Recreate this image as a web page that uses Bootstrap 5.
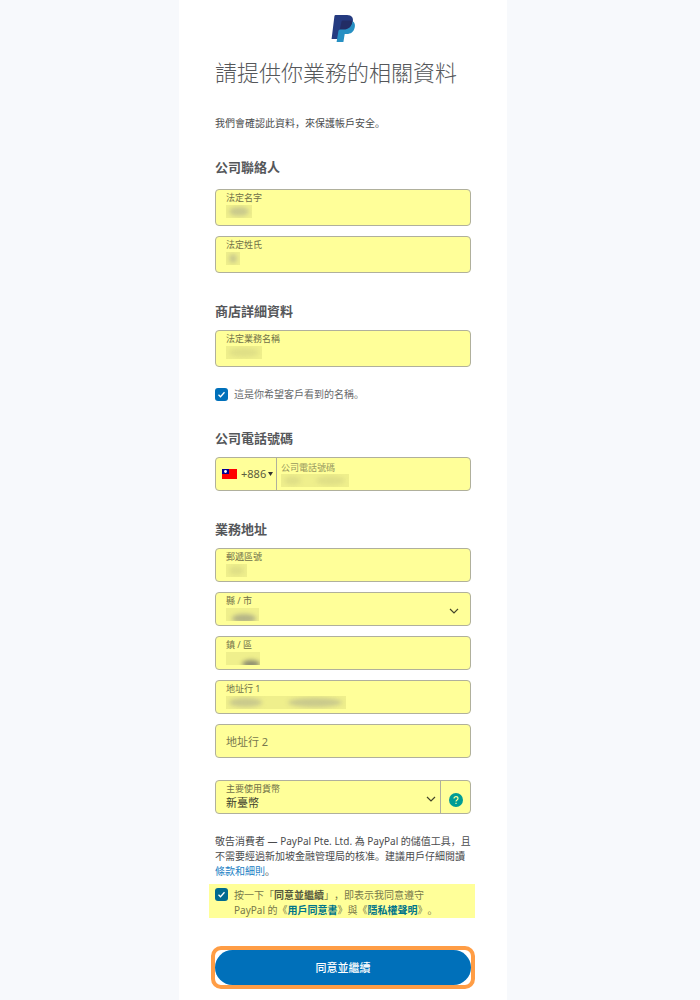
<!DOCTYPE html>
<html lang="zh-Hans">
<head>
<meta charset="utf-8">
<meta name="viewport" content="width=device-width, initial-scale=1">
<title>請提供你業務的相關資料</title>
<link href="https://cdn.jsdelivr.net/npm/bootstrap@5.3.0/dist/css/bootstrap.min.css" rel="stylesheet">
<style>
  body { background: #f7f9fc; padding-right: 14px; color: #4a4b4d; font: 10px/15px "Noto Sans", "Noto Sans CJK SC", sans-serif; text-spacing-trim: space-all; }
  .sheet { max-width: 328px; min-height: 100vh; padding: 14px 36px 12px; }
  .page-title { font: 300 22px/32px "Noto Sans CJK SC", sans-serif; color: #55575a; margin: 13px 0 29px; white-space: nowrap; }
  .block { padding-top: 18px; }
  .block-wide { padding-top: 26px; }
  .section-title { font-size: 13px; line-height: 20px; font-weight: 700; color: #55575a; margin: 0 0 9px; }
  .contact .section-title { margin-bottom: 12px; }
  .field { background: #ffff99; border: 1px solid #b0b09c; border-radius: 4px; height: 34px; margin-bottom: 10px; }
  .field-tall { height: 37px; }
  .field label { display: block; font-size: 9px; line-height: 12px; padding: 2px 10px 0; color: #6f7048; }
  .field input, .field select { display: block; width: 100%; height: 16px; border: 0; background: none; padding: 0 10px; font-size: 11px; line-height: 16px; color: #3b3c2c; outline: 0; appearance: none; }
  .field .whole { height: 32px; font-size: 11px; }
  .field .whole::placeholder { color: #77784e; opacity: 1; }
  .redacted { left: 10px; top: 15px; height: 13px; background: #efef8c; overflow: hidden; pointer-events: none; }
  .redacted i { position: absolute; inset: 2px 3px; border-radius: 50%; background: #c9c98c; filter: blur(2px); }
  .redacted i + i { left: 40%; }
  .redacted i.wide-a { right: 70%; }
  .redacted i.wide-b { left: 52%; right: 4px; }
  .redacted.faint i { background: #dfdf86; }
  .redacted i.low { inset: 6px 3px -2px 6px; background: #b4b487; }
  .redacted i.corner { inset: 8px 0 -3px 16px; background: #8f8f70; }
  .chevron { right: 11px; top: 14px; pointer-events: none; }
  .field .dial { width: 61px; border-right: 1px solid #b0b09c; }
  .dial .dial-code { padding: 0 0 0 25px; height: 32px; font-size: 11px; color: #5c5d40; }
  .dial svg.flag { left: 6px; top: 11px; }
  .dial svg.caret { right: 3px; top: 14px; }
  .field .tel label { padding: 4px 4px 0; color: #97985e; }
  .tel .redacted { left: 4px; top: 16px; }
  .currency { margin-top: 22px; }
  .help { width: 30px; border: 0; border-left: 1px solid #b0b09c; background: none; padding: 6px 0 0; }
  .tick { appearance: none; flex: none; width: 13px; height: 13px; margin: 0 6px 0 0; border-radius: 3px; background: #0070ba url("data:image/svg+xml,%3Csvg xmlns='http://www.w3.org/2000/svg' viewBox='0 0 13 13'%3E%3Cpath d='M3.5 6.8l2 2 4-4.6' fill='none' stroke='%23fff' stroke-width='1.3'/%3E%3C/svg%3E"); }
  .shown-name { margin-top: 20px; color: #66686b; }
  .agree { background: #ffff99; margin: 5px -4px 0 -6px; padding: 4px 6px 0; height: 34px; line-height: 15px; color: #77784a; }
  .agree b { color: #55573c; font-weight: 600; }
  .agree .tick { background-color: #006a90; }
  .agree a { color: #00758a; font-weight: 600; text-decoration: none; }
  .notice a { color: #1a80c4; text-decoration: none; }
  .cta-frame { border: 4px solid #ff9d45; border-radius: 10px; margin: 28px -4px 0; }
  .cta { background: #0070ba; color: #fff; border: 0; border-radius: 18px; height: 35px; font-size: 11px; line-height: 16px; font-weight: 500; }
</style>
</head>
<body>
<main class="sheet bg-white mx-auto">
  <div class="text-center">
    <svg class="d-block mx-auto" width="24" height="28" viewBox="0 0 24 28" role="img" aria-label="PayPal">
      <path d="M4.600 1H16c5 0 6.600 3 5.800 7-1 5.500-4.200 8.500-9.500 8.500H9.500L8 25H.6L3.400 2.200Q3.600 1 4.600 1z" fill="#253b80"/>
      <path d="M10.500 7.500Q10.700 6.500 12 6.500h6.500q2 0 3.100.8-.8 8.200-9.400 8.700H8.800z" fill="#222d65"/>
      <path d="M21.600 7.200c2.100 1.200 2.700 3.600 2.100 6.300-1 4.500-4 6.500-8 6.500h-2l-1.300 8H5.600L7.400 17q.2-1.500 1.800-1.500h3.400c5 0 8.200-2.800 9-8.300z" fill="#2790c3"/>
    </svg>
  </div>
  <h1 class="page-title">請提供你業務的相關資料</h1>
  <p class="mb-0">我們會確認此資料，來保護帳戶安全。</p>

  <form>
    <section class="block-wide contact">
      <h2 class="section-title">公司聯絡人</h2>
      <div class="field field-tall position-relative">
        <label for="first">法定名字</label><input id="first" type="text">
        <span class="redacted position-absolute" style="width:26px"><i></i></span>
      </div>
      <div class="field field-tall position-relative">
        <label for="last">法定姓氏</label><input id="last" type="text">
        <span class="redacted position-absolute" style="width:14px"><i></i></span>
      </div>
    </section>

    <section class="block">
      <h2 class="section-title">商店詳細資料</h2>
      <div class="field field-tall position-relative">
        <label for="biz">法定業務名稱</label><input id="biz" type="text">
        <span class="redacted faint position-absolute" style="width:36px"><i></i></span>
      </div>
      <div class="shown-name d-flex align-items-center">
        <input class="tick" type="checkbox" id="shown" checked><label for="shown">這是你希望客戶看到的名稱。</label>
      </div>
    </section>

    <section class="block-wide">
      <h2 class="section-title">公司電話號碼</h2>
      <div class="field d-flex">
        <div class="dial position-relative flex-shrink-0">
          <svg class="flag position-absolute" width="15" height="10" viewBox="0 0 15 10" aria-hidden="true"><path fill="#f00" d="M0 0h15v10H0z"/><path fill="#000095" d="M0 0h7v5H0z"/><circle cx="3.500" cy="2.500" r="1.400" fill="#fff"/></svg>
          <select class="dial-code" aria-label="國碼"><option>+886</option></select>
          <svg class="caret position-absolute" width="5" height="4" viewBox="0 0 5 4" aria-hidden="true"><path d="M0 0h5L2.500 4z" fill="#333"/></svg>
        </div>
        <div class="tel position-relative flex-grow-1">
          <label for="tel">公司電話號碼</label><input id="tel" type="tel">
          <span class="redacted faint position-absolute" style="width:68px"><i class="wide-a"></i><i class="wide-b"></i></span>
        </div>
      </div>
    </section>

    <section class="block">
      <h2 class="section-title">業務地址</h2>
      <div class="field position-relative">
        <label for="zip">郵遞區號</label><input id="zip" type="text">
        <span class="redacted faint position-absolute" style="width:21px"><i></i></span>
      </div>
      <div class="field position-relative">
        <label for="county">縣 / 市</label><select id="county"><option></option></select>
        <span class="redacted position-absolute" style="width:33px"><i class="low"></i></span>
        <svg class="chevron position-absolute" width="10" height="8" viewBox="0 0 10 8" aria-hidden="true"><path d="M1 2l4 4 4-4" fill="none" stroke="#44452c" stroke-width="1.200"/></svg>
      </div>
      <div class="field position-relative">
        <label for="town">鎮 / 區</label><input id="town" type="text">
        <span class="redacted position-absolute" style="width:34px"><i class="corner"></i></span>
      </div>
      <div class="field position-relative">
        <label for="line1">地址行 1</label><input id="line1" type="text">
        <span class="redacted position-absolute" style="width:120px"><i class="wide-a"></i><i class="wide-b"></i></span>
      </div>
      <div class="field">
        <input class="whole" type="text" placeholder="地址行 2" aria-label="地址行 2">
      </div>
      <div class="field currency d-flex">
        <div class="position-relative flex-grow-1">
          <label for="cur">主要使用貨幣</label><select id="cur"><option>新臺幣</option></select>
          <svg class="chevron position-absolute end-0 me-1" width="10" height="8" viewBox="0 0 10 8" aria-hidden="true"><path d="M1 2l4 4 4-4" fill="none" stroke="#44452c" stroke-width="1.200"/></svg>
        </div>
        <button class="help" type="button" aria-label="說明">
          <svg class="d-block mx-auto" width="14" height="14" viewBox="0 0 14 14" aria-hidden="true"><circle cx="7" cy="7" r="7" fill="#009c96"/><path d="M5 5.500c0-2.500 4-2.500 4 0C9 7 7 6.800 7 8.500M7 9.700v1.300" fill="none" stroke="#ffff99" stroke-width="1.200"/></svg>
        </button>
      </div>
    </section>

    <p class="notice mt-3 mb-0 pt-1">敬告消費者 — PayPal Pte. Ltd. 為 PayPal 的儲值工具，且不需要經過新加坡金融管理局的核准。建議用戶仔細閱讀<a href="#">條款和細則</a>。</p>

    <div class="agree d-flex">
      <input class="tick" type="checkbox" id="agree" checked>
      <label for="agree">按一下「<b>同意並繼續</b>」，即表示我同意遵守<br>PayPal 的《<a href="#">用戶同意書</a>》與《<a href="#">隱私權聲明</a>》。</label>
    </div>

    <div class="cta-frame"><button class="cta w-100 d-block" type="submit">同意並繼續</button></div>
  </form>
</main>
<script src="https://cdn.jsdelivr.net/npm/bootstrap@5.3.0/dist/js/bootstrap.bundle.min.js"></script>
</body>
</html>
